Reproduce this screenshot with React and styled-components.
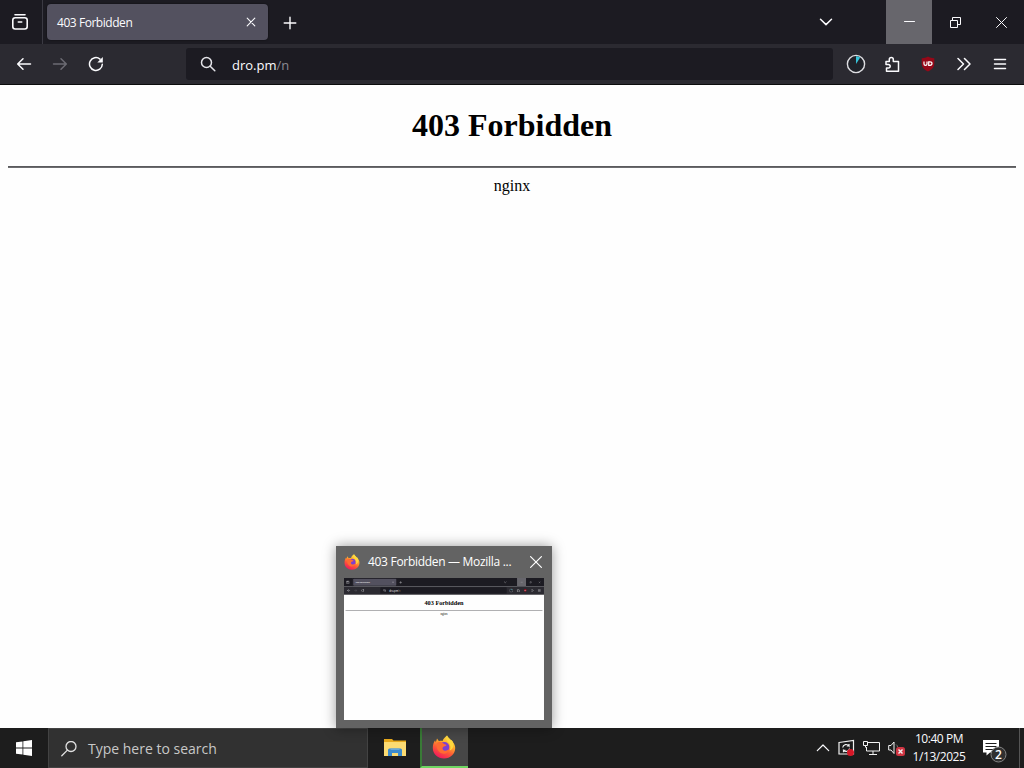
import React from 'react';
import styled, { createGlobalStyle } from 'styled-components';

const GlobalStyle = createGlobalStyle`
  * {
    box-sizing: border-box;
  }

  body {
    margin: 0;
    overflow: hidden;
    font-family: 'Open Sans', 'Noto Sans', sans-serif;
  }

  svg {
    display: block;
    flex: none;
  }
`;

const Desktop = styled.div`
  position: relative;
  display: flex;
  flex-direction: column;
  width: 1024px;
  height: 768px;
  overflow: hidden;
`;

/* ---------- browser window ---------- */

const Window = styled.div`
  display: flex;
  flex-direction: column;
  flex: none;
  width: 1024px;
  height: 728px;
  background-color: #fefefe;
`;

const TabStrip = styled.div`
  display: flex;
  height: 44px;
  background-color: #1c1b22;
`;

const FirefoxView = styled.div`
  display: flex;
  align-items: center;
  width: 43px;
  padding-left: 11px;
  border-right: 1px solid #3b3a43;
`;

const Tab = styled.div`
  display: flex;
  align-items: center;
  justify-content: space-between;
  width: 221px;
  height: 36px;
  margin: 4px 0 0 4px;
  padding: 0 12px 0 10px;
  border-radius: 4px;
  background-color: #53515f;
  box-shadow: 0 0 2px rgba(0, 0, 0, 0.6);
`;

const TabTitle = styled.div`
  display: flex;
  padding-top: 2px;
`;

const Label = styled.span`
  color: ${props => props.$color || '#fbfbfe'};
  font-size: ${props => props.$size || 12}px;
  line-height: 16px;
  letter-spacing: ${props => props.$spacing || 0}px;
  white-space: nowrap;
`;

const NewTab = styled.div`
  display: flex;
  align-items: center;
  margin-left: 15px;
  padding-top: 1px;
`;

const ListTabs = styled.div`
  display: flex;
  align-items: center;
  margin-left: auto;
  margin-right: 53px;
`;

const WindowButton = styled.div`
  display: flex;
  align-items: center;
  justify-content: center;
  width: 46px;
  height: 44px;
  background-color: ${props => (props.$hovered ? '#67666c' : 'transparent')};
`;

const Toolbar = styled.div`
  display: flex;
  align-items: center;
  height: 41px;
  border-bottom: 1px solid #0c0c0d;
  background-color: #2b2a31;
`;

const NavButtons = styled.div`
  display: flex;
  align-items: center;
  gap: 20px;
  width: 186px;
  padding-left: 16px;
`;

const UrlBar = styled.div`
  display: flex;
  align-items: center;
  width: 647px;
  height: 32px;
  padding-left: 14px;
  border-radius: 3px;
  background-color: #1c1b22;
`;

const Url = styled.div`
  display: flex;
  margin: 2px 0 0 16px;
`;

const Extensions = styled.div`
  display: flex;
  align-items: center;
  justify-content: space-between;
  width: 162px;
  margin-left: 13px;
`;

const Page = styled.div`
  flex: 1;
  padding: 21px 8px 0;
  color: #000;
  font-family: 'Liberation Serif', serif;
  text-align: center;
`;

const Heading = styled.h1`
  margin: 0;
  font-size: 32px;
  line-height: 38px;
`;

const Rule = styled.hr`
  height: 2px;
  margin: 22px 0 8px;
  border: 0;
  border-top: 1px solid #5a5a5d;
  background-color: #6c6c6f;
`;

const Server = styled.div`
  font-size: 16px;
  line-height: 19px;
`;

const Line = ({ size = 16, color = '#fbfbfe', width = 1.5, box = 16, children }) => (
  <svg
    width={size}
    height={size}
    viewBox={`0 0 ${box} ${box}`}
    fill="none"
    stroke={color}
    strokeWidth={width}
    strokeLinecap="round"
    strokeLinejoin="round"
  >
    {children}
  </svg>
);

const BrowserWindow = () => (
  <Window>
    <TabStrip>
      <FirefoxView>
        <Line size={18} box={18} width={1.6}>
          <path d="M4 1.8h10" />
          <rect x="1.8" y="4.7" width="14.4" height="11.3" rx="2.4" />
          <path d="M7.3 9h3.4" />
        </Line>
      </FirefoxView>
      <Tab>
        <TabTitle>
          <Label $spacing={-0.45}>403 Forbidden</Label>
        </TabTitle>
        <Line size={10} box={10} width={1.1}>
          <path d="M1.2 1.2l7.6 7.6M8.8 1.2L1.2 8.8" />
        </Line>
      </Tab>
      <NewTab>
        <Line size={14} box={14} width={1.4}>
          <path d="M7 1.2v11.6M1.2 7h11.6" />
        </Line>
      </NewTab>
      <ListTabs>
        <Line size={14} box={14}>
          <path d="M1.5 4.2L7 9.6l5.5-5.4" />
        </Line>
      </ListTabs>
      <WindowButton $hovered>
        <Line size={11} box={11} width={1}>
          <path d="M.5 4.5h10" />
        </Line>
      </WindowButton>
      <WindowButton>
        <svg width="11" height="11" viewBox="0 0 11 11" fill="none" stroke="#fbfbfe">
          <path d="M.5 3.5h7v7h-7zM2.5 3.5v-3h8v7h-3" />
        </svg>
      </WindowButton>
      <WindowButton>
        <Line size={11} box={11} width={1}>
          <path d="M.5 .5l10 10M10.5 .5l-10 10" />
        </Line>
      </WindowButton>
    </TabStrip>

    <Toolbar>
      <NavButtons>
        <Line>
          <path d="M14.5 8H1.8M7 2.7L1.7 8 7 13.3" />
        </Line>
        <Line color="#6c6b73">
          <path d="M1.5 8h12.7M9 2.7L14.3 8 9 13.3" />
        </Line>
        <Line>
          <path d="M14.3 8.2A6.4 6.4 0 1 1 12 3.1" />
          <path d="M14.8 1v5.5H9.3z" fill="#fbfbfe" stroke="none" />
        </Line>
      </NavButtons>
      <UrlBar>
        <Line color="#e4e4e9">
          <circle cx="6.5" cy="6.5" r="5" />
          <path d="M10.2 10.2l4.6 4.6" />
        </Line>
        <Url>
          <Label $size={13}>dro.pm</Label>
          <Label $size={13} $color="#8b8a92">/n</Label>
        </Url>
      </UrlBar>
      <Extensions>
        <svg width="20" height="20" viewBox="0 0 20 20">
          <circle cx="10" cy="10" r="8.6" fill="#202229" stroke="#dedee2" strokeWidth="1.4" />
          <path d="M10 10V2.2a7.8 7.8 0 0 1 4.2 1.2z" fill="#36c3d9" />
        </svg>
        <Line>
          <path d="M1 5.5h3.3V3.4a2 2 0 1 1 4 0v2.1H13.5v9.7H1.5v-3.2h2a1.7 1.7 0 1 0 0-3.4H1z" />
        </Line>
        <svg width="18" height="16" viewBox="0 0 18 16">
          <path d="M8 .6c2 1.3 3.8 1.6 6.3 1.6v5c0 4-2.2 6.3-6.3 8.3-4.1-2-6.3-4.3-6.3-8.3v-5C4.2 2.2 6 1.9 8 .6z" fill="#950818" />
          <g fill="none" stroke="#fff" strokeWidth="1.2">
            <path d="M4 5.5v2.5q0 1.3 1.5 1.3t1.5-1.3v-2.5" />
            <path d="M8.7 5.8v3.5h1.3q2 0 2-1.75t-2-1.75z" />
          </g>
        </svg>
        <Line>
          <path d="M1 2.5L6.5 8 1 13.5M7.5 2.5L13 8l-5.5 5.5" />
        </Line>
        <Line>
          <path d="M2.5 3.5h11M2.5 8h11M2.5 12.5h11" />
        </Line>
      </Extensions>
    </Toolbar>

    <Page>
      <Heading>403 Forbidden</Heading>
      <Rule />
      <Server>nginx</Server>
    </Page>
  </Window>
);

/* ---------- taskbar preview ---------- */

const Preview = styled.div`
  position: absolute;
  left: 336px;
  bottom: 40px;
  display: flex;
  flex-direction: column;
  width: 216px;
  height: 182px;
  padding: 0 8px 8px;
  background-color: #636363;
  box-shadow: 0 0 12px rgba(0, 0, 0, 0.4);
`;

const PreviewTitle = styled.div`
  display: flex;
  align-items: center;
  height: 32px;
  padding-right: 2px;
`;

const PreviewText = styled.div`
  flex: 1;
  display: flex;
  margin-left: 8px;
`;

const Thumbnail = styled.div`
  width: 200px;
  height: 142px;
  overflow: hidden;
`;

const Scaled = styled.div`
  width: 1024px;
  height: 728px;
  transform: scale(0.1953);
  transform-origin: 0 0;
`;

const FirefoxLogo = ({ size }) => (
  <svg width={size} height={size} viewBox="0 0 24 24">
    <defs>
      <linearGradient id="flame" x1=".8" y1="0" x2=".3" y2="1">
        <stop offset="0" stopColor="#fff04f" />
        <stop offset=".35" stopColor="#ffb02b" />
        <stop offset=".65" stopColor="#ff5a36" />
        <stop offset="1" stopColor="#f0155f" />
      </linearGradient>
    </defs>
    <path
      d="M15 .5c1 2.3 3 3.3 4 4.7.8 0 1.4.7 1.7 1.5 1.5 1.7 2.5 4 2.5 6.3 0 6-5 10.5-11.2 10.5S.8 19 .8 13c0-3.5 1-6 2.3-7.800l.7 2L5 3.500l2 2.700c1-.4 2.400-.4 3.500-.2C11.500 3.500 13 2 15 .5z"
      fill="url(#flame)"
    />
    <circle cx="12.300" cy="12" r="5" fill="#7d3fd0" />
    <path d="M4.500 8.500c2-2 5-2 7.500.5 1.200.2 2.200.7 2.500 1.200-1 1.300-3 .8-3.800 2.300-.7 1.500.3 3 2 3.200 2 .3 3-1 4.500-.6-1.500 3-4.500 4.400-7.700 3.200-3.500-1.300-5.300-5.500-5-9.800z" fill="#ff6b32" />
    <path d="M15 .5c-1.500 3.500 0 5.500 1.700 7.300 2 2.200 2.300 5 1 7.800 3.300-1.500 4.600-5 3-8.900C20.400 5.900 19.800 5.200 19 5.200 18 3.800 16 2.800 15 .5z" fill="#ffd83d" />
  </svg>
);

const WindowPreview = () => (
  <Preview>
    <PreviewTitle>
      <FirefoxLogo size={16} />
      <PreviewText>
        <Label $spacing={-0.3} $color="#fff">403 Forbidden — Mozilla ...</Label>
      </PreviewText>
      <Line size={12} box={12} width={1.2} color="#fff">
        <path d="M.6 .6l10.8 10.8M11.4 .6L.6 11.4" />
      </Line>
    </PreviewTitle>
    <Thumbnail>
      <Scaled>
        <BrowserWindow />
      </Scaled>
    </Thumbnail>
  </Preview>
);

/* ---------- taskbar ---------- */

const Bar = styled.div`
  display: flex;
  height: 40px;
  background-color: #1d1d1d;
`;

const Start = styled.div`
  display: flex;
  align-items: center;
  justify-content: center;
  width: 48px;
`;

const Search = styled.div`
  display: flex;
  align-items: center;
  gap: 11px;
  width: 320px;
  padding: 1px 0 0 12px;
  border: 1px solid #434343;
  background-color: #313131;
`;

const TaskButton = styled.div`
  display: flex;
  align-items: center;
  justify-content: center;
  width: 48px;
  margin-left: ${props => (props.$active ? 0 : '4px')};
  padding-right: 2px;
  border-left: ${props => (props.$active ? '2px solid #397b36' : '0')};
  border-bottom: ${props => (props.$active ? '2px solid #6fd663' : '0')};
  background-color: ${props => (props.$active ? '#474747' : 'transparent')};
`;

const Tray = styled.div`
  display: flex;
  align-items: center;
  margin-left: auto;
`;

const TrayIcons = styled.div`
  display: flex;
  align-items: center;
  gap: 8px;
`;

const Clock = styled.div`
  display: flex;
  flex-direction: column;
  align-items: center;
  width: 56px;
  gap: 2px;
  margin: 0 14px 0 6px;
`;

const ShowDesktop = styled.div`
  width: 5px;
  height: 40px;
  margin-left: 12px;
  border-left: 1px solid #555;
`;

const BadgeCount = styled.text`
  fill: #fff;
  font-size: 12px;
  font-weight: 600;
  text-anchor: middle;
`;

const Taskbar = () => (
  <Bar>
    <Start>
      <svg width="16" height="16" viewBox="0 0 16 16" fill="#fff">
        <path d="M0 2.3L6.5 1.4v6.2H0zM7.3 1.3L16 0v7.6H7.3zM0 8.4h6.5v6.2L0 13.7zM7.3 8.4H16V16l-8.7-1.3z" />
      </svg>
    </Start>
    <Search>
      <Line size={16} width={1.3} color="#e0e0e0">
        <circle cx="10" cy="5.5" r="5" />
        <path d="M6.4 9.1L.8 14.7" />
      </Line>
      <Label $size={14} $color="#c8c8c8">Type here to search</Label>
    </Search>
    <TaskButton>
      <svg width="22" height="20" viewBox="0 0 22 20">
        <path d="M0 1h8l1.5 1.5H22v4H0z" fill="#e8a91c" />
        <path d="M0 4h22v14H0z" fill="#fcdb72" />
        <path d="M4 18v-6q0-1.5 1.5-1.5h11q1.5 0 1.5 1.5v6h-4v-3H8v3z" fill="#3c8bcd" />
        <path d="M6.5 10.5h9V12h-9z" fill="#6ba9d8" />
      </svg>
    </TaskButton>
    <TaskButton $active>
      <FirefoxLogo size={24} />
    </TaskButton>
    <Tray>
      <TrayIcons>
        <Line size={14} box={14} width={1.2}>
          <path d="M1.3 9.7L7 4l5.7 5.7" />
        </Line>
        <svg width="17" height="18" viewBox="0 0 17 18" fill="none" stroke="#f2f2f2" strokeWidth="1.2">
          <path d="M1 3.5L15.5 1.5v13.5H1z" />
          <path d="M4.7 8.5a3.5 3.5 0 0 1 6.3-1.5V5M11 7H8.7M11.5 9.5a3.5 3.5 0 0 1-6 1.8v2M5.5 11.3h2" />
          <circle cx="12.5" cy="13.5" r="3.5" fill="#d71727" stroke="none" />
        </svg>
        <svg width="17" height="16" viewBox="0 0 17 16" fill="none" stroke="#f2f2f2">
          <path d="M5 2.5h11.5v8.5H3.5v-4M10 11v3.5M6 14.5h8" />
          <path d="M.5 1.5h4v4h-4zM2.5 5.5v2" />
        </svg>
        <svg width="17" height="16" viewBox="0 0 17 16" fill="none" stroke="#f2f2f2">
          <path d="M.7 5.5h2.3L6 2v11.5L3 10H.7z" />
          <path d="M8 4.5q1.5 1 1.5 2.5" stroke="#777" />
          <rect x="8" y="7" width="9" height="9" rx="2.5" fill="#cf3542" stroke="none" />
          <path d="M10.5 9.5l4 4M14.5 9.5l-4 4" strokeWidth="1.4" />
        </svg>
      </TrayIcons>
      <Clock>
        <Label $spacing={-0.45}>10:40 PM</Label>
        <Label $spacing={-0.45}>1/13/2025</Label>
      </Clock>
      <svg width="26" height="34" viewBox="0 0 26 34">
        <path d="M2 9h16v12.5H9L5.5 24.5v-3H2z" fill="#fff" />
        <path d="M4.5 12.5h11M4.5 15.5h11M4.5 18.5h8" stroke="#1d1d1d" />
        <circle cx="17.5" cy="23.5" r="7.5" fill="#303030" stroke="#858585" />
        <BadgeCount x="17.5" y="28">2</BadgeCount>
      </svg>
      <ShowDesktop />
    </Tray>
  </Bar>
);

const App = () => {
  return (
    <>
      <GlobalStyle />
      <Desktop>
        <BrowserWindow />
        <Taskbar />
        <WindowPreview />
      </Desktop>
    </>
  );
};

export default App;
